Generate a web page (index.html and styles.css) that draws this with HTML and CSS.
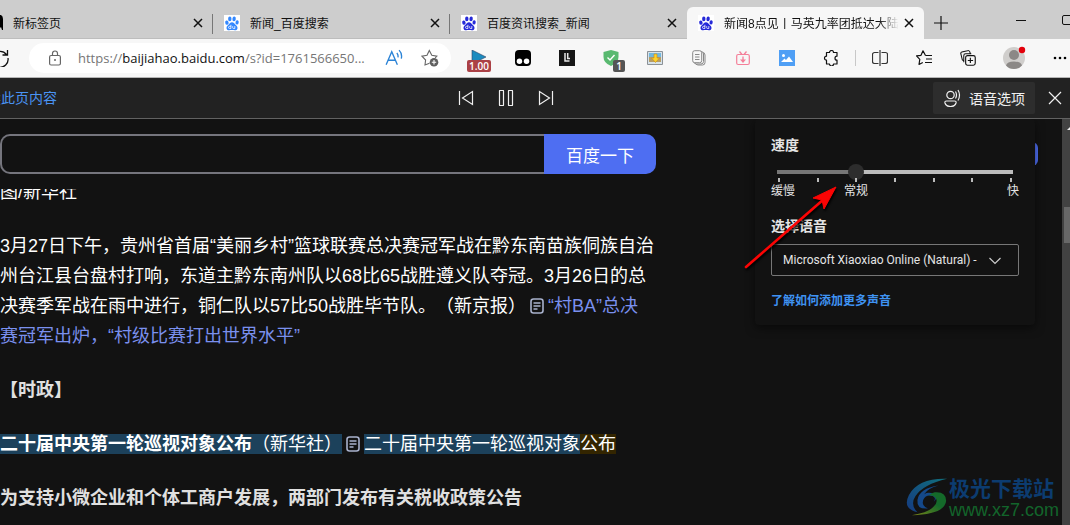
FILE: index.html
```html
<!DOCTYPE html>
<html lang="zh-CN">
<head>
<meta charset="utf-8">
<title>新闻8点见</title>
<link rel="stylesheet" href="styles.css">
</head>
<body>
<svg class="defs" width="0" height="0" aria-hidden="true">
  <symbol id="paw" viewBox="0 0 16 16">
    <ellipse cx="2.9" cy="7.6" rx="1.7" ry="2.2" transform="rotate(-12 2.9 7.6)"/>
    <ellipse cx="5.8" cy="3.9" rx="1.7" ry="2.4"/>
    <ellipse cx="10.1" cy="3.9" rx="1.7" ry="2.4" transform="rotate(8 10.1 3.9)"/>
    <ellipse cx="13.1" cy="7.4" rx="1.6" ry="2.2" transform="rotate(10 13.1 7.4)"/>
    <path d="M8 7.2c1.6 0 2.4 1.3 3.3 2.4 1 1.100 2.200 1.700 2.200 3.300 0 1.600-1.200 2.400-2.700 2.300-1-.1-1.800-.3-2.800-.3s-1.800.2-2.800.3C3.700 15.300 2.500 14.500 2.500 12.900c0-1.600 1.200-2.200 2.200-3.300C5.600 8.500 6.400 7.200 8 7.200z"/>
    <path d="M6.900 9.800v3.700H5.600a1.100 1.100 0 0 1 0-2.200h1.300M8.700 11.200v1.500q0 .8.800.8h1.300v-2.400" fill="none" stroke="#fff" stroke-width=".8"/>
  </symbol>
  <symbol id="cross" viewBox="0 0 10 10"><path d="M1 1l8 8M9 1l-8 8" fill="none" stroke="currentColor" stroke-width="1.500"/></symbol>
  <symbol id="doc" viewBox="0 0 14 16"><rect x="1" y="1" width="12" height="14" rx="2.500" fill="none" stroke="currentColor" stroke-width="1.600"/><path d="M3.500 5h7M3.500 8h7M3.500 11h4" stroke="currentColor" stroke-width="1.300"/></symbol>
</svg>

<header class="tabs">
  <div class="tab tab-first">
    <svg class="nubby" viewBox="0 0 4 16"><path d="M0 0h1q2 1 2 4v11H2L1 12 0 13z"/></svg>
    <span class="tab-title">新标签页</span>
    <button class="tab-close" aria-label="关闭"><svg><use href="#cross"/></svg></button>
  </div>
  <div class="tab">
    <svg class="favicon light"><use href="#paw"/></svg>
    <span class="tab-title">新闻_百度搜索</span>
    <button class="tab-close" aria-label="关闭"><svg><use href="#cross"/></svg></button>
  </div>
  <div class="tab">
    <svg class="favicon"><use href="#paw"/></svg>
    <span class="tab-title">百度资讯搜索_新闻</span>
    <button class="tab-close" aria-label="关闭"><svg><use href="#cross"/></svg></button>
  </div>
  <div class="tab active">
    <svg class="favicon"><use href="#paw"/></svg>
    <span class="tab-title fade">新闻8点见丨马英九率团抵达大陆</span>
    <button class="tab-close" aria-label="关闭"><svg><use href="#cross"/></svg></button>
  </div>
  <button class="new-tab" aria-label="新建标签页"><svg viewBox="0 0 14 14"><path d="M7 0v14M0 7h14" stroke="#111" stroke-width="1.200"/></svg></button>
  <div class="window-buttons">
    <button aria-label="最小化"><svg viewBox="0 0 10 10"><path d="M0 5.500h10" stroke="#111"/></svg></button>
    <button aria-label="最大化"><svg viewBox="0 0 10 10"><rect x=".5" y=".5" width="9" height="9" rx="1.500" fill="none" stroke="#111"/></svg></button>
  </div>
</header>

<nav class="toolbar">
  <button class="refresh" aria-label="刷新"><svg viewBox="0 0 18 18"><path d="M15.500 5.500A8 8 0 1 0 17 9M16.500 1v5h-5" fill="none" stroke="#111" stroke-width="1.300"/></svg></button>
  <div class="address">
    <svg class="lock" viewBox="0 0 12 16"><path d="M3.500 5.500v-2a2.500 2.500 0 0 1 5 0v2" fill="none" stroke="#666" stroke-width="1.200"/><rect x=".6" y="5.500" width="10.800" height="9.500" rx="1.500" fill="none" stroke="#666" stroke-width="1.200"/><circle cx="6" cy="10" r="1" fill="#666"/></svg>
    <span class="url">https://<b>baijiahao.baidu.com</b>/s?id=1761566650...</span>
    <button class="address-btn" aria-label="大声朗读"><svg viewBox="0 0 16 16"><path d="M1 14L6 2.500 11 14M3 10h6M10.500 3.500q1.500 1.500 1 4M12.500 1q3 3 2 7.500" fill="none" stroke="#2b83d6" stroke-width="1.200"/></svg></button>
    <button class="address-btn" aria-label="收藏"><svg viewBox="0 0 18 18"><path d="M8.500 14.200L4 16l.6-5L1 7.200l5-.9 2.300-4.800 2.500 4.800 5 .9-1.600 1.600" fill="none" stroke="#666" stroke-width="1.100"/><circle cx="13" cy="13.200" r="4.300" fill="#5f5f5f"/><path d="M13 11v4.400M10.800 13.200h4.400" stroke="#fff" stroke-width="1.100"/></svg></button>
  </div>
  <div class="extensions">
    <button aria-label="速度控制"><svg viewBox="0 0 16 16"><path d="M1 0v14l14-7z" fill="#1c8bbf" stroke="#346" stroke-width=".6"/></svg><span class="badge red">1.00</span></button>
    <button aria-label="脚本管理"><svg viewBox="0 0 14 14"><rect width="14" height="14" rx="3.500"/><circle cx="3.900" cy="9.800" r="2.400" fill="#fff"/><circle cx="10.100" cy="9.800" r="2.400" fill="#fff"/></svg></button>
    <button aria-label="扩展"><svg viewBox="0 0 16 16"><path d="M0 0h16v16H0z" fill="#161616"/><path d="M6 3v8h4.500M8.700 3v5.500H11" fill="none" stroke="#e8e8e8" stroke-width="1.500"/></svg></button>
    <button aria-label="防护"><svg viewBox="0 0 16 16"><path d="M8 0l7.500 2v5q0 6-7.500 9Q.500 13 .5 7V2z" fill="#59b970"/><path d="M4.500 7.500L7 10l4.500-5" fill="none" stroke="#fff" stroke-width="1.400"/></svg><span class="badge gray">1</span></button>
    <button aria-label="图片下载"><svg viewBox="0 0 16 14"><path d="M.5.5h15v13H.5z" fill="#d8e3ea" stroke="#8b9197"/><path d="M2 2h12v4H2z" fill="#72b7df"/><path d="M2 6h12v5H2z" fill="#b79d67"/><path d="M7 3h3v4h2.500l-4 4.500L4.500 7H7z" fill="#fbd32c" stroke="#c98918" stroke-width=".6"/></svg></button>
    <button aria-label="复制"><svg viewBox="0 0 14 16"><g fill="#f7f7f7" stroke="#888"><rect x="3.500" y="2.500" width="9.500" height="12.500" rx="2.500"/><rect x="2" y="1.500" width="9.500" height="12.500" rx="2.500"/><rect x=".7" y=".7" width="9" height="12" rx="2"/></g><path d="M3 4.500h4.500M3 7h4.500M3 9.500h4.500" stroke="#888"/></svg></button>
    <button aria-label="视频下载"><svg viewBox="-1 -1 16 16"><rect x=".7" y="3.500" width="12.600" height="10" rx="1.500" fill="none" stroke="#f47f99" stroke-width="1.200"/><path d="M3.500.5L6 3.500M10.500.5L8 3.500M7 5.500v4" stroke="#f47f99" stroke-width="1.300"/><path d="M4 8.500h6l-3 3.500z" fill="#f47f99"/></svg></button>
    <button aria-label="图片"><svg viewBox="0 0 16 16"><path d="M0 0h16v16H0z" fill="#4f9ff5"/><circle cx="4.500" cy="5.500" r="1.500" fill="#fff"/><path d="M2 12l3.500-3.500L7 10l3-3.500 4 5.500z" fill="#fff"/></svg></button>
    <button aria-label="扩展管理"><svg viewBox="0 0 16 16"><path d="M3.500 2.500h3a2 2 0 0 1 4 0H14v3.700a2 2 0 0 0 0 4V14h-3.500a2 2 0 0 1-4 0h-3v-3.800a2 2 0 0 1 0-4z" fill="none" stroke="#111" stroke-width="1.200" stroke-linejoin="round"/></svg></button>
    <span class="divider"></span>
    <button aria-label="分屏"><svg viewBox="0 0 16 16"><path d="M6.500 2.500H2.500a2 2 0 0 0-2 2v7a2 2 0 0 0 2 2h4M9.500 2.500h4a2 2 0 0 1 2 2v7a2 2 0 0 1-2 2h-4M8 0v16" fill="none" stroke="#333" stroke-width="1.200"/></svg></button>
    <button aria-label="收藏夹"><svg viewBox="0 0 16 16"><path d="M9.500 5.500L7 .8 5 5.300l-4.500.6 3.300 3.400L3 14.500l3.800-2M9.500 5.500H16M10 9h6M9 12.500h7" fill="none" stroke="#111" stroke-width="1.200" stroke-linejoin="round"/></svg></button>
    <button aria-label="集锦"><svg viewBox="0 0 17 17"><path d="M4 11.500L2.500 10.500 1 4.500a2 2 0 0 1 1-2.500l6-1.300a2 2 0 0 1 2.500 1.500L11 4M4 13V6q0-2 2-2h6" fill="none" stroke="#111" stroke-width="1.100"/><rect x="6" y="6" width="10.200" height="10.200" rx="2" fill="#f7f7f7" stroke="#111" stroke-width="1.200"/><path d="M11 8.300v5.600M8.300 11.100h5.600" stroke="#111" stroke-width="1.200"/></svg></button>
    <button class="profile" aria-label="个人资料"><svg viewBox="0 0 24 24"><circle cx="12" cy="12" r="11" fill="#d0cecc"/><circle cx="12" cy="9" r="5" fill="#8b8886"/><path d="M4 19.500Q5 15.500 12 15.500t8 4Q17 23 12 23t-8-3.500z" fill="#8b8886"/><circle cx="20" cy="4" r="3.200" fill="#e3000b"/></svg></button>
    <button class="more" aria-label="更多"><svg viewBox="0 0 14 4"><circle cx="2" cy="2" r="1.300"/><circle cx="7" cy="2" r="1.300"/><circle cx="12" cy="2" r="1.300"/></svg></button>
  </div>
</nav>

<section class="reader">
  <a class="reader-link" href="#article">读此页内容</a>
  <div class="playback">
    <button aria-label="上一段"><svg viewBox="0 0 16 16"><path d="M1.500 1v14M14.500 1.500v13L4.500 8z"/></svg></button>
    <button aria-label="暂停"><svg viewBox="0 0 16 16"><rect x="1.500" y=".5" width="4" height="15" rx=".5"/><rect x="10.500" y=".5" width="4" height="15" rx=".5"/></svg></button>
    <button aria-label="下一段"><svg viewBox="0 0 16 16"><path d="M14.500 1v14M1.500 1.500v13L11.500 8z"/></svg></button>
  </div>
  <div class="reader-end">
    <button class="voice-btn"><svg viewBox="0 0 18 18"><circle cx="7.500" cy="6" r="3.700"/><path d="M3.500 12h8q2 0 1.500 2-1 3.500-5.500 3.500T2 14q-.5-2 1.500-2zM12.500 2.500q2 3.500 0 7M15 1q3 5 0 10.500"/></svg>语音选项</button>
    <button class="reader-close" aria-label="关闭"><svg viewBox="0 0 14 14"><path d="M1 1l12 12M13 1L1 13"/></svg></button>
  </div>
</section>

<div class="viewport">
  <div class="page">
    <form class="search">
      <input type="text" aria-label="搜索">
      <button type="button">百度一下</button>
      <button class="side-btn" type="button" aria-label="更多操作"></button>
    </form>
    <main class="article" id="article">
      <p class="caption">图/新华社</p>
      <p>3月27日下午，贵州省首届“美丽乡村”篮球联赛总决赛冠军战在黔东南苗族侗族自治<br>州台江县台盘村打响，东道主黔东南州队以68比65战胜遵义队夺冠。3月26日的总<br>决赛季军战在雨中进行，铜仁队以57比50战胜毕节队。（新京报）<svg class="doc"><use href="#doc"/></svg><a href="#article">“村BA”总决<br>赛冠军出炉，“村级比赛打出世界水平”</a></p>
      <p class="heading">【时政】</p>
      <p><span class="spoken"><strong>二十届中央第一轮巡视对象公布</strong>（新华社）</span><svg class="doc"><use href="#doc"/></svg><a class="spoken" href="#article">二十届中央第一轮巡视对象<mark>公布</mark></a></p>
      <p class="heading">为支持小微企业和个体工商户发展，两部门发布有关税收政策公告</p>
    </main>
  </div>
  <div class="scrollbar"><svg viewBox="0 0 8 6"><path d="M1 5L5 1l4 4z" fill="#eee"/></svg><div class="scroll-thumb"></div></div>

  <aside class="voice-panel">
    <label class="panel-title" for="speed">速度</label>
    <input class="speed" id="speed" type="range" min="0" max="6" value="2">
    <div class="ticks"><i></i><i></i><i></i><i></i><i></i><i></i><i></i></div>
    <div class="speed-labels"><span>缓慢</span><span>常规</span><span>快</span></div>
    <label class="panel-title voice-title" for="voice">选择语音</label>
    <div class="select-wrap">
      <select id="voice"><option>Microsoft Xiaoxiao Online (Natural) -</option></select>
      <svg viewBox="0 0 12 8"><path d="M.5 1L6 6.500 11.500 1" fill="none" stroke="#ccc" stroke-width="1.200"/></svg>
    </div>
    <a class="panel-link" href="#voice">了解如何添加更多声音</a>
  </aside>

  <svg class="pointer" viewBox="0 0 96 86"><path d="M2 82L80 14" stroke="#fb0404" stroke-width="2.600" stroke-linecap="round"/><path d="M92 2L69 13l9 2 2 9z" fill="#fb0404" stroke="#fb0404"/></svg>

  <div class="watermark">
    <svg viewBox="0 0 46 42">
      <defs><linearGradient id="blue" x1="0" y1="1" x2="1" y2="0"><stop offset="0" stop-color="#153a80"/><stop offset="1" stop-color="#11707e"/></linearGradient><linearGradient id="green" x1="0" y1="1" x2="1" y2="0"><stop offset="0" stop-color="#7b8418"/><stop offset=".6" stop-color="#146a2a"/></linearGradient></defs>
      <path d="M44 1Q14 0 4 18q-7 14 9 18-8-8-2-17Q19 7 44 1z" fill="url(#blue)"/>
      <path d="M35 8Q15 11 13 23q-1 10 11 9-7-3-5-9 3-6 10-4 4 2 1 6 5-5 0-8-5-3-10 0Q24 11 35 8z" fill="#14488a"/>
      <path d="M31 15q12-1 12 9-1 14-36 15 18-3 23-9 5-5 2-9-2-3-7-3 2-2 6-3z" fill="url(#green)"/>
    </svg>
    <div><div class="wm-name">极光下载站</div><div class="wm-url">www.xz7.com</div></div>
  </div>
</div>
</body>
</html>
```

FILE: styles.css
```css
* { box-sizing: border-box; }
body {
  margin: 0;
  height: 100vh;
  display: flex;
  flex-direction: column;
  overflow: hidden;
  background: #121212;
  font-family: "Liberation Sans", "Noto Sans CJK SC", sans-serif;
  text-spacing-trim: space-all;
}
button { border: 0; padding: 0; background: none; font: inherit; color: inherit; }
a { text-decoration: none; }
svg { display: block; flex: none; }
.defs { position: absolute; }

/* Tab strip */
.tabs {
  display: flex;
  align-items: flex-end;
  flex: none;
  height: 39px;
  background: #cdcdcd;
  overflow: hidden;
}
.tab {
  display: flex;
  align-items: center;
  flex: 0 0 237px;
  height: 32px;
  padding: 0 7px 0 11px;
  position: relative;
  font-size: 12px;
  color: #111;
  border-bottom: 1px solid #bdbdbd;
}
.tab:not(.active)::after {
  content: "";
  position: absolute;
  right: 0;
  top: 7px;
  width: 1px;
  height: 20px;
  background: #777;
}
.tab:nth-child(3)::after { display: none; }
.tab-first { flex-basis: 213px; padding-left: 0; }
.nubby { width: 4px; height: 16px; margin-right: 9px; }
.favicon { width: 16px; height: 16px; margin-right: 10px; background: #fff; fill: #2529d8; }
.favicon.light { fill: #3388ff; }
.tab-title { flex: 1; white-space: nowrap; overflow: hidden; }
.fade { mask-image: linear-gradient(to right, #000 155px, transparent 175px); }
.tab-close { width: 16px; height: 16px; display: grid; place-items: center; }
.tab-close svg { width: 10px; height: 10px; }
.active { background: #f7f7f7; border-radius: 6px 6px 0 0; border-bottom-color: #f7f7f7; }
.new-tab { width: 34px; height: 32px; display: grid; place-items: center; }
.new-tab svg { width: 14px; height: 14px; }
.window-buttons { display: flex; align-self: flex-start; margin: 0 -20px 0 auto; }
.window-buttons button { width: 46px; height: 39px; display: grid; place-items: center; }
.window-buttons svg { width: 10px; height: 10px; }

/* Browser toolbar */
.toolbar {
  display: flex;
  align-items: center;
  flex: none;
  height: 39px;
  background: #f7f7f7;
  border-bottom: 1px solid #b5b5b5;
  overflow: hidden;
}
.refresh { width: 29px; }
.refresh svg { width: 18px; height: 18px; margin-left: -9px; }
.address {
  flex: 1;
  min-width: 0;
  height: 30px;
  display: flex;
  align-items: center;
  padding: 0 12px 0 20px;
  border-radius: 15px;
  background: #fff;
}
.lock { width: 12px; height: 16px; margin-right: 17px; }
.url { flex: 1; white-space: nowrap; overflow: hidden; font: 13px/20px "Open Sans", sans-serif; color: #767676; }
.url b { font-weight: 400; color: #111; }
.address-btn { width: 18px; margin-left: 18px; }
.address-btn:first-of-type { margin-left: 0; }
.address-btn svg { width: 18px; height: 18px; }
.extensions { display: flex; align-items: center; margin: 0 -12px 0 6px; }
.extensions button { width: 44px; height: 38px; display: grid; place-items: center; position: relative; }
.extensions svg { width: 16px; height: 16px; }
.extensions .profile { width: 48px; }
.extensions .profile svg { width: 24px; height: 24px; }
.extensions .more svg { width: 14px; height: 4px; }
.badge {
  position: absolute;
  top: 21px;
  border-radius: 2px;
  font: 600 10px/12px "Open Sans", sans-serif;
  color: #fff;
  text-align: center;
}
.badge.red { left: 10px; width: 24px; background: #ab4146; }
.badge.gray { left: 24px; width: 12px; background: #555; }
.divider { width: 1px; height: 16px; margin: 0 2px; background: #c8c8c8; }

/* Read-aloud bar */
.reader {
  display: grid;
  grid-template-columns: 1fr auto 1fr;
  align-items: center;
  flex: none;
  height: 41px;
  margin-left: -58px;
  background: #222;
  border-bottom: 1px solid #626262;
  color: #f0f0f0;
  font-size: 14px;
}
.reader svg { fill: none; stroke: currentColor; stroke-width: 1.2; }
.reader-link { padding-left: 45px; line-height: 20px; color: #4a94f4; }
.playback { display: flex; gap: 8px; }
.playback button { width: 32px; height: 32px; display: grid; place-items: center; }
.playback svg { width: 16px; height: 16px; }
.reader-end { display: flex; justify-content: flex-end; gap: 4px; }
.voice-btn {
  display: flex;
  align-items: center;
  gap: 8px;
  height: 32px;
  padding: 0 10px;
  border-radius: 2px;
  background: #2d2d2d;
}
.voice-btn svg { width: 18px; height: 18px; }
.reader-close { width: 31px; height: 32px; display: grid; place-items: center; }
.reader-close svg { width: 14px; height: 14px; }

/* Page */
.viewport { display: flex; flex: 1; min-height: 0; position: relative; overflow: hidden; }
.page { flex: 1; min-width: 0; overflow: hidden; }
.search { display: flex; align-items: center; height: 70px; background: #121212; position: relative; z-index: 1; }
.search input {
  width: 544px;
  height: 40px;
  padding: 0 12px;
  border: 2px solid #75757d;
  border-right: 0;
  border-radius: 10px 0 0 10px;
  background: #121212;
  color: #eee;
  font-size: 16px;
}
.search button { width: 112px; height: 40px; border-radius: 0 10px 10px 0; background: #4e6ef2; color: #fff; font-size: 17px; }
.search .side-btn { width: 64px; height: 24px; margin: 0 24px 0 auto; border-radius: 6px; }
.article { margin-top: -12px; font-size: 18px; line-height: 30px; color: #fff; white-space: nowrap; }
.article p { margin: 0 0 24px; }
.article a { color: #7a90ee; }
.heading { font-weight: 700; color: #e0e0e0; }
.doc { display: inline-block; width: 14px; height: 16px; margin: 0 4px; vertical-align: -2px; color: #a9b2cd; }
.article .spoken {
  color: #fff;
  background: linear-gradient(#1c415b, #1c415b) center / 100% 20px no-repeat;
}
mark { color: inherit; background: linear-gradient(#332500, #332500) center / 100% 20px no-repeat, #121212; }

.scrollbar { width: 8px; background: #424242; }
.scrollbar svg { width: 8px; height: 6px; margin: 6px 0 0 4px; }
.scroll-thumb { height: 36px; margin: 76px 0 0 2px; background: #686868; }

/* Voice options */
.voice-panel {
  position: absolute;
  z-index: 2;
  top: 0;
  right: 35px;
  width: 280px;
  padding: 16px;
  border-radius: 4px;
  background: #121212;
  box-shadow: 0 3px 10px rgba(0, 0, 0, .5);
  color: #e4e4e4;
  font-size: 12px;
  line-height: 16px;
}
.panel-title { display: block; font-size: 14px; font-weight: 700; line-height: 20px; }
.speed { appearance: none; display: block; width: 100%; height: 16px; margin: 9px 0 0; background: none; }
.speed::-webkit-slider-runnable-track {
  height: 4px;
  background: linear-gradient(to right, transparent 6px, #767676 6px 34%, #bbb 34% calc(100% - 6px), transparent calc(100% - 6px));
}
.speed::-webkit-slider-thumb { appearance: none; width: 16px; height: 16px; margin-top: -6px; border-radius: 50%; background: #2d2d2d; }
.ticks { display: flex; justify-content: space-between; height: 4px; margin: -2px 7px 1px; }
.ticks i { width: 2px; height: 4px; background: #bbb; }
.speed-labels { display: grid; grid-template-columns: 73px auto 1fr; }
.speed-labels span:last-child { text-align: right; }
.voice-title { margin: 17px 0 8px; }
.select-wrap { position: relative; }
.select-wrap select {
  appearance: none;
  width: 100%;
  height: 32px;
  padding: 0 40px 0 11px;
  border: 1px solid #777;
  border-radius: 2px;
  background: #121212;
  color: #e4e4e4;
  font: 12px Roboto, sans-serif;
}
.select-wrap svg { position: absolute; right: 18px; top: 13px; width: 12px; height: 8px; pointer-events: none; }
.panel-link { display: block; margin: 17px 0 0; font-weight: 700; color: #3f93f2; }

.pointer { position: absolute; z-index: 3; right: 230px; top: 66px; width: 96px; height: 86px; filter: drop-shadow(1px 2px 1px #000); }

.watermark { position: absolute; right: 11px; bottom: 6px; display: flex; align-items: center; }
.watermark svg { width: 44px; height: 42px; }
.wm-name { font-size: 21px; font-weight: 700; line-height: 24px; color: #0c3c70; }
.wm-url { font-size: 18px; line-height: 18px; color: #12652b; }
```
